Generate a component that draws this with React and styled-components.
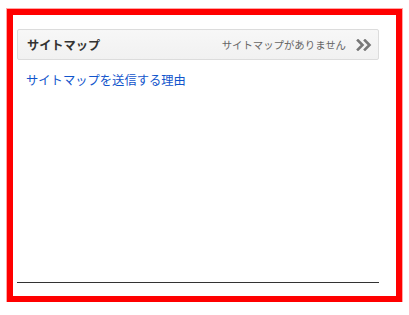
import React from 'react';
import styled, { createGlobalStyle } from 'styled-components';

const GlobalStyle = createGlobalStyle`
  html, body {
    margin: 0;
    padding: 0;
    background: #fff;
    font-family: Arial, "Liberation Sans", "Noto Sans CJK JP", sans-serif;
  }
`;

const Frame = styled.div`
  box-sizing: border-box;
  margin: 9px 0 0 7px;
  width: 395px;
  height: 293px;
  border: 6px solid #ff0000;
  box-shadow: 0 0 0 1px rgba(255, 0, 0, 0.35);
  padding: 14px 17px 13px 4px;
  display: flex;
  flex-direction: column;
`;

const HeaderBar = styled.div`
  box-sizing: border-box;
  height: 31px;
  display: flex;
  align-items: center;
  padding: 0 6px 0 9px;
  border: 1px solid #dcdcdc;
  border-radius: 2px;
  background: linear-gradient(#f7f7f7, #f1f1f1);
`;

const Title = styled.span`
  flex: 1;
  font-size: 12.2px;
  font-weight: bold;
  color: #333;
`;

const Status = styled.span`
  font-size: 10.4px;
  color: #666;
  margin-right: 10px;
`;

const Link = styled.a`
  display: block;
  margin: 13px 0 0 9px;
  font-size: 12.3px;
  line-height: 16px;
  color: #1155cc;
  text-decoration: none;
`;

const Spacer = styled.div`
  flex: 1;
`;

const Divider = styled.div`
  height: 1px;
  background: #333;
`;

const DoubleChevron = () => (
  <svg width="16" height="12" viewBox="0 0 16 12">
    <g fill="none" stroke="#777" strokeWidth="2.6" strokeLinecap="square">
      <polyline points="2,1.5 6.5,6 2,10.5" />
      <polyline points="9,1.5 13.5,6 9,10.5" />
    </g>
  </svg>
);

export default function App() {
  return (
    <>
      <GlobalStyle />
      <Frame>
        <HeaderBar>
          <Title>サイトマップ</Title>
          <Status>サイトマップがありません</Status>
          <DoubleChevron />
        </HeaderBar>
        <Link href="#">サイトマップを送信する理由</Link>
        <Spacer />
        <Divider />
      </Frame>
    </>
  );
}
